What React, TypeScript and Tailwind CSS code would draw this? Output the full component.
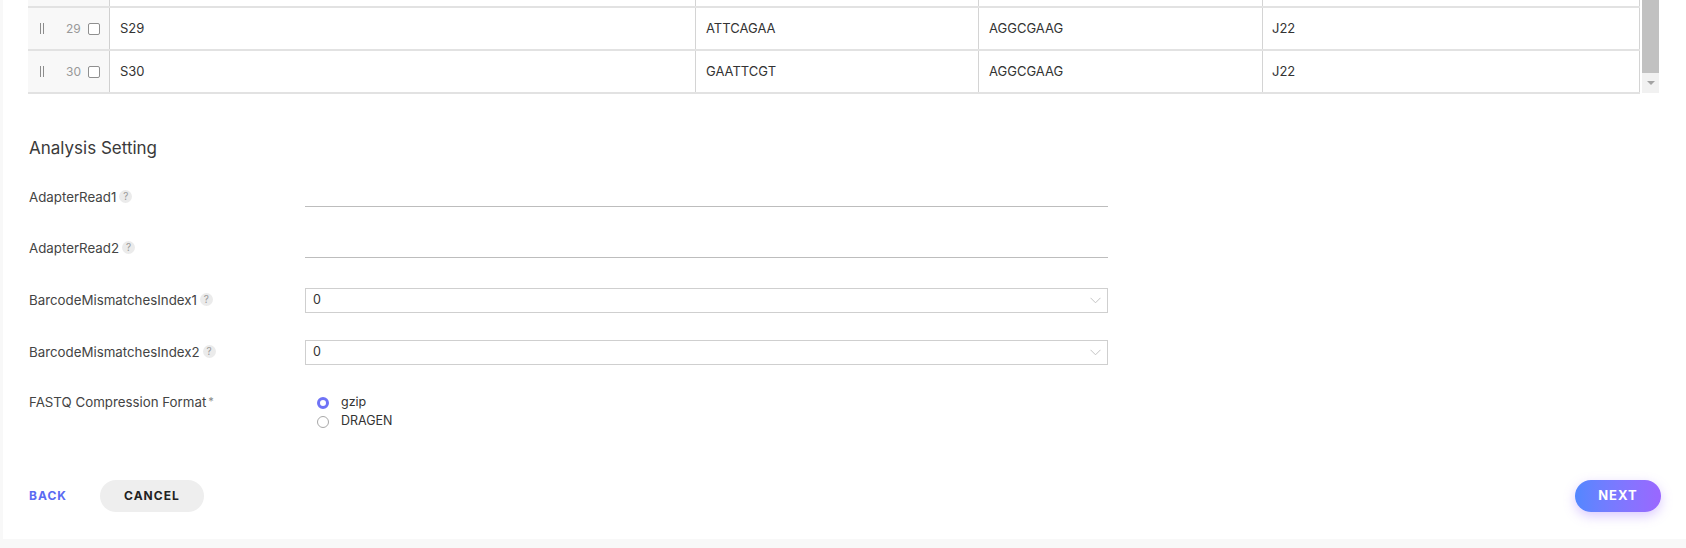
import React from "react";

const rows = [
  { n: 29, name: "S29", i7: "ATTCAGAA", i5: "AGGCGAAG", well: "J22" },
  { n: 30, name: "S30", i7: "GAATTCGT", i5: "AGGCGAAG", well: "J22" },
];

const cols = "grid grid-cols-[82px_586px_283px_284px_377px]";

const Help = () => (
  <span className="ml-[3px] inline-flex h-[13px] w-[13px] -translate-y-[2px] items-center justify-center rounded-full bg-[#ebebeb] text-[10px] leading-none text-[#9a9a9a]">
    ?
  </span>
);

const Chevron = () => (
  <svg width="11" height="7" viewBox="0 0 11 7" fill="none" className="mr-[6px]">
    <path d="M0.5 0.8L5.5 5.8L10.5 0.8" stroke="#c4c4c4" strokeWidth="1" />
  </svg>
);

const Radio = ({ checked, label }: { checked?: boolean; label: string }) => (
  <div className="flex h-[19px] items-center">
    <span
      className={
        checked
          ? "h-[12px] w-[12px] rounded-full border-[3.5px] border-[#6f73f6] bg-white"
          : "h-[12px] w-[12px] rounded-full border border-[#a8a8a8] bg-white"
      }
    />
    <span className="ml-[12px] text-[12.5px] text-[#333]">{label}</span>
  </div>
);

export default function App() {
  return (
    <div className="min-h-[548px] w-[1686px] bg-[#f8f8f8] pl-[3px] font-['Inter','Liberation_Sans',sans-serif]">
      <div className="h-[539px] bg-white pl-[25px] pr-[25px] pb-[26px]">
        {/* grid with scrollbar */}
        <div className="flex h-[94px] gap-[2px]">
          <div className="w-[1612px]">
            <div className={`${cols} h-[6px]`}>
              <div className="border-r border-[#d4d4d4] bg-[#f8f8f8]" />
              <div className="border-r border-[#d4d4d4]" />
              <div className="border-r border-[#d4d4d4]" />
              <div className="border-r border-[#d4d4d4]" />
              <div className="border-r border-[#d4d4d4]" />
            </div>
            {rows.map((r) => (
              <div
                key={r.n}
                className={`${cols} h-[43px] border-t-2 border-[#e2e2e2] text-[13px] text-[#333]`}
              >
                <div className="flex items-center border-r border-[#d0d0d0] bg-[#f8f8f8]">
                  <span className="ml-[12px] flex gap-[2px]">
                    <span className="h-[11px] w-[1px] bg-[#8c8c8c]" />
                    <span className="h-[11px] w-[1px] bg-[#8c8c8c]" />
                  </span>
                  <span className="ml-[22px] w-[14px] text-[12px] text-[#999]">{r.n}</span>
                  <span className="ml-[8px] h-[12px] w-[12px] rounded-[2px] border border-[#8f8f8f] bg-white" />
                </div>
                <div className="flex items-center border-r border-[#d4d4d4] pl-[10px]">{r.name}</div>
                <div className="flex items-center border-r border-[#d4d4d4] pl-[10px]">{r.i7}</div>
                <div className="flex items-center border-r border-[#d4d4d4] pl-[10px]">{r.i5}</div>
                <div className="flex items-center border-r border-[#d4d4d4] pl-[9px]">{r.well}</div>
              </div>
            ))}
            <div className="h-[2px] bg-[#e2e2e2]" />
          </div>
          <div className="flex h-[93px] w-[17px] flex-col bg-[#f1f1f1]">
            <div className="h-[73px] bg-[#c1c1c1]" />
            <div className="flex flex-1 items-center justify-center">
              <span className="h-0 w-0 border-x-[4px] border-t-[4px] border-x-transparent border-t-[#a3a3a3]" />
            </div>
          </div>
        </div>

        {/* Analysis setting */}
        <div className="pl-[1px]">
          <h2 className="mt-[42px] text-[17px] leading-[24px] text-[#3a3a3a]">Analysis Setting</h2>

          <div className="mt-[27px] flex h-[20px]">
            <div className="w-[276px] text-[13.3px] leading-[20px] text-[#444]">
              AdapterRead1
              <Help />
            </div>
            <div className="h-[20px] w-[803px] border-b border-[#bdbdbd]" />
          </div>

          <div className="mt-[31px] flex h-[20px]">
            <div className="w-[276px] text-[13.3px] leading-[20px] text-[#444]">
              AdapterRead2
              <Help />
            </div>
            <div className="h-[20px] w-[803px] border-b border-[#bdbdbd]" />
          </div>

          <div className="mt-[30px] flex h-[25px]">
            <div className="w-[276px] pt-[2px] text-[13.3px] leading-[20px] text-[#444]">
              BarcodeMismatchesIndex1
              <Help />
            </div>
            <div className="flex h-[25px] w-[803px] items-center justify-between border border-[#cfcfcf] pl-[7px] text-[12.5px] text-[#333]">
              0
              <Chevron />
            </div>
          </div>

          <div className="mt-[27px] flex h-[25px]">
            <div className="w-[276px] pt-[2px] text-[13.3px] leading-[20px] text-[#444]">
              BarcodeMismatchesIndex2
              <Help />
            </div>
            <div className="flex h-[25px] w-[803px] items-center justify-between border border-[#cfcfcf] pl-[7px] text-[12.5px] text-[#333]">
              0
              <Chevron />
            </div>
          </div>

          <div className="mt-[27px] flex">
            <div className="w-[276px] text-[13.3px] leading-[20px] text-[#444]">
              FASTQ Compression Format
              <span className="ml-[2px] inline-block -translate-y-[2px] text-[11px] text-[#888]">*</span>
            </div>
            <div className="pl-[12px] pt-[1px]">
              <Radio checked label="gzip" />
              <Radio label="DRAGEN" />
            </div>
          </div>
        </div>

        {/* buttons */}
        <div className="mt-[49px] flex items-center justify-between">
          <div className="flex items-center">
            <button className="ml-[1px] text-[12px] font-bold tracking-[1px] text-[#5b6bf2]">BACK</button>
            <button className="ml-[33px] h-[32px] w-[104px] rounded-full bg-[#eeeeee] text-[12px] font-bold tracking-[1px] text-[#222]">
              CANCEL
            </button>
          </div>
          <button className="h-[32px] w-[86px] rounded-full bg-gradient-to-r from-[#5287ff] to-[#9a67ff] text-[13px] font-bold tracking-[1px] text-white shadow-[0_4px_12px_rgba(150,100,255,0.35)]">
            NEXT
          </button>
        </div>
      </div>
    </div>
  );
}
